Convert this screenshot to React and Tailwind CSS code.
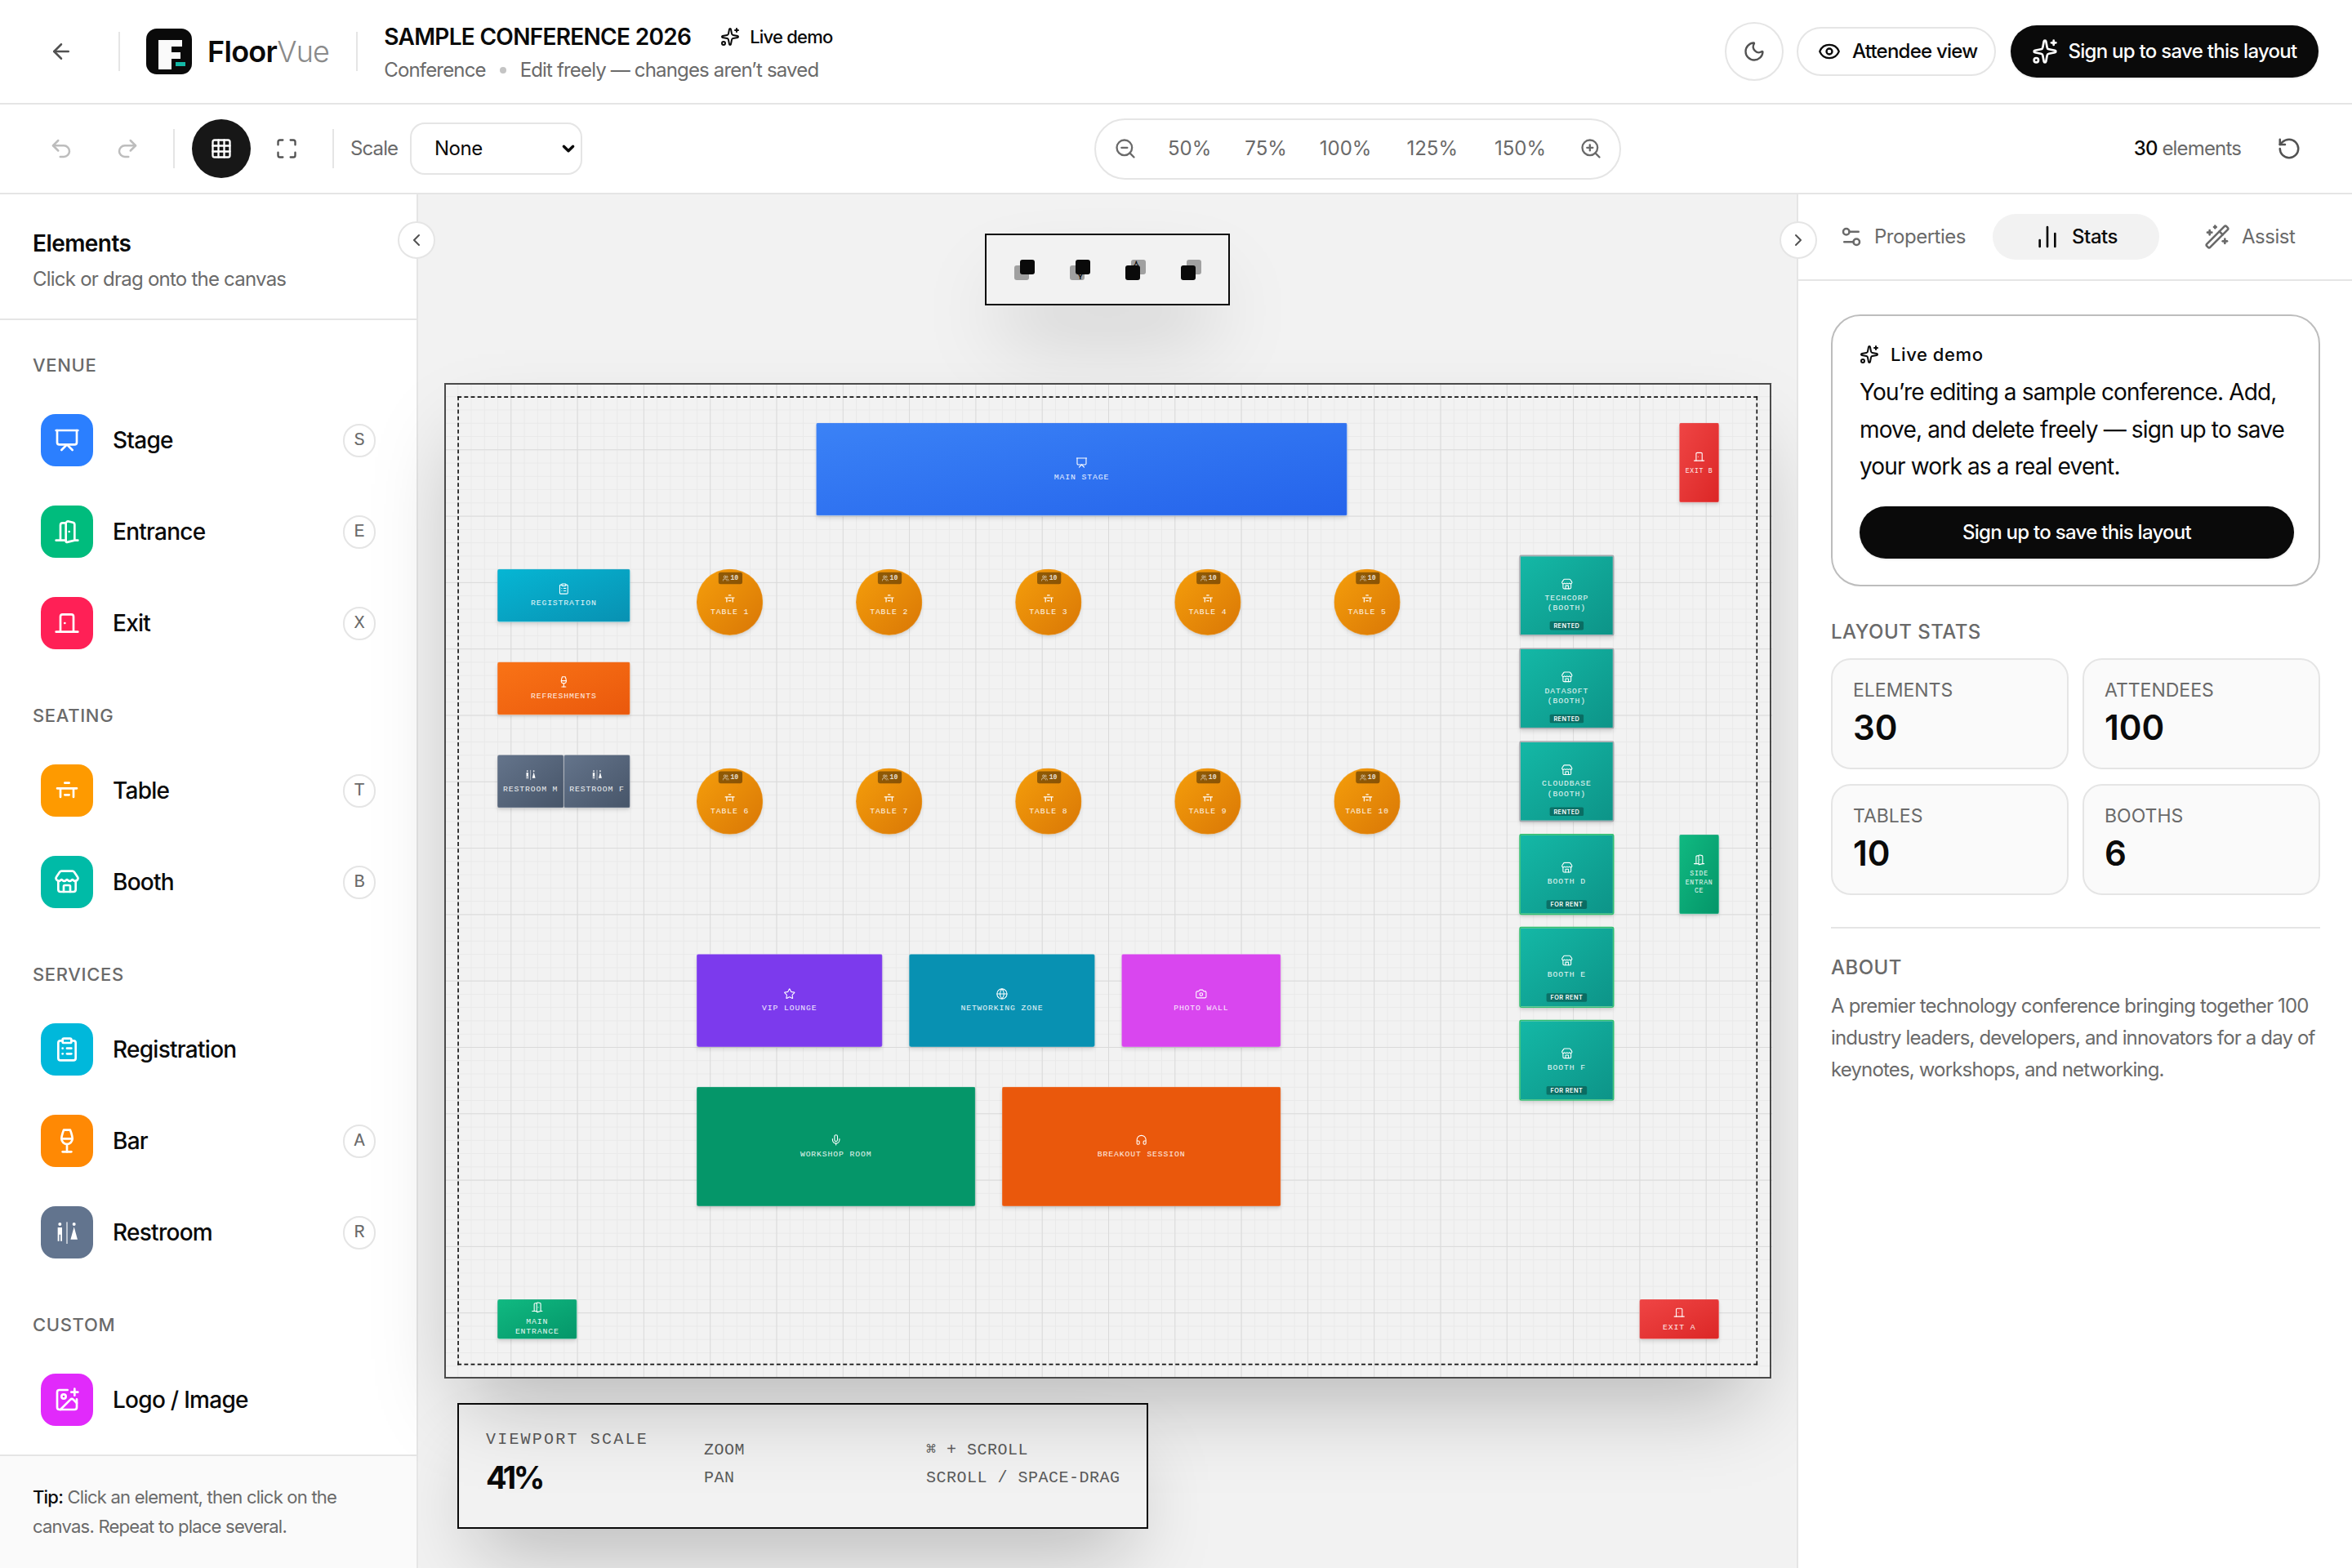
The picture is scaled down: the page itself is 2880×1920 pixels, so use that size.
import React from 'react';
import { ArrowLeft, Sparkles, Undo2, Redo2, Grid3x3, Maximize, Moon, Eye, ZoomIn, ZoomOut, RotateCcw, Settings2, ChartNoAxesColumn, WandSparkles, ChevronLeft, ChevronRight, Presentation, DoorOpen, DoorClosed, Store, ClipboardList, Wine, ImagePlus, Star, Globe, Camera, Mic, Headphones, Users } from 'lucide-react';

function TableIcon({ className }) {
  return (
    <svg viewBox="0 0 24 24" fill="none" stroke="currentColor" strokeWidth="2" strokeLinecap="round" className={className}>
      <path d="M10 5h4M3 10h18M6 10v8M18 10v8M10 16h4" />
    </svg>
  );
}
function RestroomIcon({ className }) {
  return (
    <svg viewBox="0 0 24 24" fill="currentColor" className={className}>
      <circle cx="5.5" cy="4.5" r="1.5" />
      <path d="M3.5 7.5h4V20h-1.4v-6H4.9v6H3.5z" />
      <rect x="11.4" y="2.5" width="1.2" height="20" opacity="0.7" />
      <circle cx="18.5" cy="4.5" r="1.5" />
      <path d="M18.5 7l3.2 11.5h-6.4z" />
    </svg>
  );
}
function LogoMark() {
  return (
    <svg viewBox="0 0 56 56" className="h-14 w-14 shrink-0">
      <rect width="56" height="56" rx="13" fill="#0a0a0a" />
      <path d="M15 14h29v8H31v7h11v8H31v13H15z" fill="#fafafa" />
      <rect x="36" y="41" width="12" height="5" fill="#14b8a6" />
    </svg>
  );
}
function LayerIcon({ front, arrow }) {
  return (
    <div className="relative h-[25px] w-[25px]">
      <div className={front === 'tr' ? 'absolute bottom-0 left-0 h-[18px] w-[18px] rounded-[3px] bg-[#0a0a0a] opacity-35' : 'absolute right-0 top-0 h-[18px] w-[18px] rounded-[3px] bg-[#0a0a0a] opacity-35'} />
      {arrow === 'down' && <div className="absolute left-[10px] top-[17px] text-[9px] font-bold leading-[8px] text-[#0a0a0a]">Y</div>}
      {arrow === 'up' && <div className="absolute right-[8px] top-0 text-[9px] font-bold leading-[8px] text-[#0a0a0a]">⋏</div>}
      <div className={front === 'tr' ? 'absolute right-0 top-0 h-[18px] w-[18px] rounded-[3px] bg-[#0a0a0a]' : 'absolute bottom-0 left-0 h-[18px] w-[18px] rounded-[3px] bg-[#0a0a0a]'} />
    </div>
  );
}

const groups = [
  { title: 'VENUE', items: [
    { n: 'Stage', k: 'S', I: Presentation, c: 'bg-[#2b7fff]' },
    { n: 'Entrance', k: 'E', I: DoorOpen, c: 'bg-[#00bc7d]' },
    { n: 'Exit', k: 'X', I: DoorClosed, c: 'bg-[#ff2056]' },
  ] },
  { title: 'SEATING', items: [
    { n: 'Table', k: 'T', I: TableIcon, c: 'bg-[#fe9a00]' },
    { n: 'Booth', k: 'B', I: Store, c: 'bg-[#00bba7]' },
  ] },
  { title: 'SERVICES', items: [
    { n: 'Registration', I: ClipboardList, c: 'bg-[#00b8db]' },
    { n: 'Bar', k: 'A', I: Wine, c: 'bg-[#ff8904]' },
    { n: 'Restroom', k: 'R', I: RestroomIcon, c: 'bg-[#62748e]' },
  ] },
  { title: 'CUSTOM', items: [
    { n: 'Logo / Image', I: ImagePlus, c: 'bg-[#e12afb]' },
  ] },
];

const G = {
  stage: 'bg-gradient-to-br from-[#3b82f6] to-[#2563eb]',
  cyan: 'bg-gradient-to-br from-[#06b6d4] to-[#0891b2]',
  orange: 'bg-gradient-to-br from-[#f97316] to-[#ea580c]',
  slate: 'bg-gradient-to-br from-[#64748b] to-[#475569]',
  green: 'bg-gradient-to-br from-[#10b981] to-[#059669]',
  red: 'bg-gradient-to-br from-[#ef4444] to-[#dc2626]',
};

const boxes = [
  { x: 560, y: 60, w: 800, h: 140, c: G.stage, I: Presentation, t: 'MAIN STAGE' },
  { x: 1860, y: 60, w: 60, h: 120, c: G.red, I: DoorClosed, t: 'EXIT B', s: true },
  { x: 80, y: 280, w: 200, h: 80, c: G.cyan, I: ClipboardList, t: 'REGISTRATION' },
  { x: 80, y: 420, w: 200, h: 80, c: G.orange, I: Wine, t: 'REFRESHMENTS' },
  { x: 80, y: 560, w: 100, h: 80, c: G.slate, I: RestroomIcon, t: 'RESTROOM M', xs: true },
  { x: 180, y: 560, w: 100, h: 80, c: G.slate, I: RestroomIcon, t: 'RESTROOM F', xs: true },
  { x: 1860, y: 680, w: 60, h: 120, c: G.green, I: DoorOpen, t: 'SIDE ENTRANCE', s: true },
  { x: 380, y: 860, w: 280, h: 140, c: 'bg-[#7c3aed]', I: Star, t: 'VIP LOUNGE' },
  { x: 700, y: 860, w: 280, h: 140, c: 'bg-[#0891b2]', I: Globe, t: 'NETWORKING ZONE' },
  { x: 1020, y: 860, w: 240, h: 140, c: 'bg-[#d946ef]', I: Camera, t: 'PHOTO WALL' },
  { x: 380, y: 1060, w: 420, h: 180, c: 'bg-[#059669]', I: Mic, t: 'WORKSHOP ROOM' },
  { x: 840, y: 1060, w: 420, h: 180, c: 'bg-[#ea580c]', I: Headphones, t: 'BREAKOUT SESSION' },
  { x: 80, y: 1380, w: 120, h: 60, c: G.green, I: DoorOpen, t: 'MAIN ENTRANCE' },
  { x: 1800, y: 1380, w: 120, h: 60, c: G.red, I: DoorClosed, t: 'EXIT A' },
];

const tables = [1, 2, 3, 4, 5, 6, 7, 8, 9, 10].map((n, i) => ({ n, x: 380 + (i % 5) * 240, y: i < 5 ? 280 : 580 }));

const booths = [
  { l: ['TECHCORP', '(BOOTH)'], chip: 'RENTED', y: 259 },
  { l: ['DATASOFT', '(BOOTH)'], chip: 'RENTED', y: 399 },
  { l: ['CLOUDBASE', '(BOOTH)'], chip: 'RENTED', y: 539 },
  { l: ['BOOTH D'], chip: 'FOR RENT', y: 679 },
  { l: ['BOOTH E'], chip: 'FOR RENT', y: 819 },
  { l: ['BOOTH F'], chip: 'FOR RENT', y: 959 },
];

function Canvas() {
  return (
    <div className="relative h-[1219px] w-[1625px] shrink-0 overflow-visible shadow-[0_50px_100px_-24px_rgba(0,0,0,0.25)]">
      <div className="absolute left-0 top-0 h-[1499px] w-[2000px] origin-top-left scale-[0.813] bg-[#f2f2f2] bg-[linear-gradient(to_right,#dadada_1.5px,transparent_1.5px),linear-gradient(to_bottom,#dadada_1.5px,transparent_1.5px),linear-gradient(to_right,#e9e9e9_1px,transparent_1px),linear-gradient(to_bottom,#e9e9e9_1px,transparent_1px)] bg-[size:100px_100px,100px_100px,20px_20px,20px_20px] font-['Liberation_Mono',monospace] text-white">
        <div className="absolute bottom-[20px] left-[20px] right-[22px] top-[20px] border-2 border-dashed border-[#111]" />
        {boxes.map((b) => (
          <div key={b.t} style={{ left: b.x, top: b.y, width: b.w, height: b.h }} className={`absolute flex flex-col items-center justify-center gap-[6px] rounded-[3px] border border-white/20 px-2 text-center shadow-md ${b.c}`}>
            <b.I className="h-[18px] w-[18px] shrink-0" strokeWidth={1.8} />
            <div className={b.s ? 'w-full text-[10px] leading-[13px] tracking-[0.09em] text-white/90 [overflow-wrap:anywhere]' : b.xs ? 'whitespace-nowrap text-[12px] leading-[15px] tracking-[0.09em] text-white/90' : 'text-[12px] leading-[15px] tracking-[0.09em] text-white/90'}>{b.t}</div>
          </div>
        ))}
        {tables.map((t) => (
          <div key={t.n} style={{ left: t.x, top: t.y }} className="absolute flex h-[100px] w-[100px] flex-col items-center justify-center gap-1 rounded-full border border-white/10 bg-gradient-to-br from-[#f59e0b] to-[#d97706] shadow-md">
            <div className="absolute left-[32px] top-[4px] flex h-[18px] w-[36px] items-center justify-center gap-[2px] rounded-[3px] bg-black/40 text-[10px] font-bold text-white/80">
              <Users className="h-[10px] w-[10px]" />10
            </div>
            <TableIcon className="mt-[8px] h-[18px] w-[18px] shrink-0" />
            <div className="whitespace-nowrap text-[12px] leading-[15px] tracking-[0.09em] text-white/90">TABLE {t.n}</div>
          </div>
        ))}
        {booths.map((b) => (
          <div key={b.l[0]} style={{ left: 1619, top: b.y }} className={b.chip === 'RENTED' ? 'absolute flex h-[122px] w-[143px] flex-col items-center justify-center rounded-[3px] border-[2.5px] border-[#a3a8ad] bg-gradient-to-br from-[#14b8a6] to-[#0d9488] text-center shadow-md' : 'absolute flex h-[122px] w-[143px] flex-col items-center justify-center rounded-[3px] border-[2.5px] border-[#2fbf71] bg-gradient-to-br from-[#14b8a6] to-[#0d9488] text-center shadow-md'}>
            <Store className="mb-[5px] h-[18px] w-[18px] shrink-0" strokeWidth={1.8} />
            {b.l.map((s) => <div key={s} className="text-[12px] leading-[15px] tracking-[0.09em] text-white/90">{s}</div>)}
            <div className="absolute bottom-[7px] rounded-[2px] bg-black/30 px-[6px] font-['Inter',sans-serif] text-[9px] font-semibold leading-[13px] tracking-[0.06em] text-white">{b.chip}</div>
          </div>
        ))}
      </div>
      <div className="pointer-events-none absolute inset-0 border-2 border-[#4a4a4a]" />
    </div>
  );
}

function Sidebar() {
  return (
    <aside className="relative flex w-[512px] shrink-0 flex-col border-r-2 border-[#e5e5e5] bg-white">
      <div className="flex h-[154px] shrink-0 flex-col border-b-2 border-[#e5e5e5] px-10 pt-[42px]">
        <div className="text-[28px] font-semibold leading-[36px] tracking-[-0.02em] text-[#0a0a0a]">Elements</div>
        <div className="mt-[8px] text-[24px] leading-[36px] tracking-[-0.032em] text-[#6a6a6a]">Click or drag onto the canvas</div>
      </div>
      <div className="flex min-h-0 flex-1 flex-col gap-[42px] overflow-hidden pt-[40px]">
        {groups.map((g) => (
          <div key={g.title}>
            <div className="mb-[21px] px-10 text-[22px] font-medium leading-[30px] tracking-[0.03em] text-[#6a6a6a]">{g.title}</div>
            {g.items.map((it) => (
              <div key={it.n} className="flex h-[112px] items-center pl-[50px] pr-[50px]">
                <div className={`flex h-16 w-16 shrink-0 items-center justify-center rounded-[18px] text-white ${it.c}`}>
                  <it.I className="h-8 w-8" strokeWidth={2} />
                </div>
                <div className="ml-[24px] flex-1 text-[28px] font-medium tracking-[-0.026em] text-[#0a0a0a]">{it.n}</div>
                {it.k && <div className="flex h-[41px] w-[40px] items-center justify-center rounded-full border-2 border-[#e5e5e5] font-['Liberation_Mono',monospace] text-[22px] text-[#6a6a6a]">{it.k}</div>}
              </div>
            ))}
          </div>
        ))}
      </div>
      <div className="h-[139px] shrink-0 border-t-2 border-[#e5e5e5] bg-[#fafafa] px-10 pt-[32px] text-[22px] leading-[36px] tracking-[-0.035em] text-[#6a6a6a]">
        <span className="font-medium text-[#0a0a0a]">Tip:</span> Click an element, then click on the canvas. Repeat to place several.
      </div>
      <div className="absolute left-[487px] top-[33px] flex h-[46px] w-[46px] items-center justify-center rounded-full border-2 border-[#e5e5e5] bg-white text-[#525252]">
        <ChevronLeft className="h-6 w-6" />
      </div>
    </aside>
  );
}

function RightPanel() {
  const stats = [['ELEMENTS', '30'], ['ATTENDEES', '100'], ['TABLES', '10'], ['BOOTHS', '6']];
  return (
    <aside className="relative flex w-[680px] shrink-0 flex-col border-l-2 border-[#e5e5e5] bg-white">
      <div className="flex h-[106px] shrink-0 items-center border-b-2 border-[#e5e5e5] text-[24px] tracking-[-0.02em] text-[#6a6a6a]">
        <div className="ml-[50px] flex w-[188px] items-center gap-[13px]"><Settings2 className="h-[30px] w-[30px]" />Properties</div>
        <div className="flex h-[56px] w-[204px] items-center justify-center gap-[14px] rounded-full bg-[#f2f2f2] font-medium text-[#0a0a0a]"><ChartNoAxesColumn className="h-8 w-8" />Stats</div>
        <div className="ml-[55px] flex items-center gap-[14px]"><WandSparkles className="h-8 w-8" />Assist</div>
      </div>
      <div className="flex flex-col pl-10 pr-[39px] pt-[41px]">
        <div className="h-[333px] rounded-[36px] border-2 border-[#bdbdbd] px-[33px] pt-[32px]">
          <div className="flex h-[30px] items-center gap-[14px] text-[22px] font-medium tracking-[0.026em] text-[#0a0a0a]"><Sparkles className="h-6 w-6" />Live demo</div>
          <p className="mt-[9px] text-[28px] leading-[45.5px] tracking-[-0.03em] text-[#0a0a0a]">You’re editing a sample conference. Add, move, and delete freely — sign up to save your work as a real event.</p>
          <div className="mt-[25px] flex h-[64px] w-[532px] items-center justify-center rounded-full bg-[#0a0a0a] text-[24px] font-medium tracking-[-0.03em] text-white shadow-sm">Sign up to save this layout</div>
        </div>
        <div className="mt-[40px] text-[24px] font-medium leading-[32px] tracking-[0.02em] text-[#6a6a6a]">LAYOUT STATS</div>
        <div className="mt-[16px] grid grid-cols-2 gap-x-[17px] gap-y-[18px]">
          {stats.map(([a, b]) => (
            <div key={a} className="h-[136px] rounded-[24px] border-2 border-[#e5e5e5] bg-[#fafafa] px-[25px] pt-[21px]">
              <div className="text-[23px] leading-[32px] text-[#6a6a6a]">{a}</div>
              <div className="mt-[2px] text-[42px] font-semibold leading-[56px] text-[#0a0a0a]">{b}</div>
            </div>
          ))}
        </div>
        <div className="mt-[39px] h-[2px] bg-[#e5e5e5]" />
        <div className="mt-[32px] text-[24px] font-medium leading-[32px] tracking-[0.02em] text-[#6a6a6a]">ABOUT</div>
        <p className="mt-[11px] text-[24px] leading-[39px] tracking-[-0.035em] text-[#6a6a6a]">A premier technology conference bringing together 100 industry leaders, developers, and innovators for a day of keynotes, workshops, and networking.</p>
      </div>
      <div className="absolute -left-[23px] top-[33px] flex h-[46px] w-[46px] items-center justify-center rounded-full border-2 border-[#e5e5e5] bg-white text-[#525252]">
        <ChevronRight className="h-6 w-6" />
      </div>
    </aside>
  );
}

export default function App() {
  return (
    <div className="flex h-screen w-screen flex-col overflow-hidden bg-white font-['Inter',sans-serif]">
      <header className="flex h-[128px] shrink-0 items-center border-b-2 border-[#e5e5e5] pl-[60px] pr-[41px]">
        <ArrowLeft className="h-[30px] w-[30px] text-[#525252]" strokeWidth={2} />
        <div className="ml-[55px] h-[48px] w-[2px] bg-[#e5e5e5]" />
        <div className="ml-8"><LogoMark /></div>
        <div className="ml-[19px] text-[36px] font-semibold tracking-[-0.02em] text-[#0a0a0a]">Floor<span className="font-light text-[#8a8a8a]">Vue</span></div>
        <div className="ml-[33px] h-[48px] w-[2px] bg-[#e5e5e5]" />
        <div className="ml-[32px] pt-[4px]">
          <div className="flex items-center">
            <div className="text-[28px] font-semibold leading-[38px] tracking-[-0.025em] text-[#0a0a0a]">SAMPLE CONFERENCE 2026</div>
            <div className="ml-[36px] flex items-center gap-[12px] text-[22px] font-medium tracking-[-0.035em] text-[#0a0a0a]"><Sparkles className="h-6 w-6" />Live demo</div>
          </div>
          <div className="mt-[4px] flex items-center text-[24px] leading-[36px] tracking-[-0.035em] text-[#6a6a6a]">
            Conference<span className="mx-[17px] h-2 w-2 rounded-full bg-[#c4c4c4]" />Edit freely — changes aren’t saved
          </div>
        </div>
        <div className="flex-1" />
        <div className="flex h-[72px] w-[72px] items-center justify-center rounded-full border-2 border-[#e5e5e5] text-[#525252]"><Moon className="h-7 w-7" /></div>
        <div className="ml-[16px] flex h-[60px] w-[244px] items-center gap-[14px] rounded-full border-2 border-[#e5e5e5] pl-[24px] text-[24px] font-medium tracking-[-0.032em] text-[#0a0a0a]"><Eye className="h-7 w-7" />Attendee view</div>
        <div className="ml-[18px] flex h-[64px] w-[377px] items-center justify-center gap-[12px] rounded-full bg-[#0a0a0a] text-[24px] font-medium tracking-[-0.03em] text-white shadow-sm"><Sparkles className="h-8 w-8" />Sign up to save this layout</div>
      </header>
      <div className="flex h-[110px] shrink-0 items-center border-b-2 border-[#e5e5e5] pl-[60px] pr-[62px]">
        <Undo2 className="h-[30px] w-[30px] text-[#bdbdbd]" />
        <Redo2 className="ml-[51px] h-[30px] w-[30px] text-[#bdbdbd]" />
        <div className="ml-[41px] h-[48px] w-[2px] bg-[#e5e5e5]" />
        <div className="ml-[21px] flex h-[72px] w-[72px] items-center justify-center rounded-full bg-[#171717] text-white"><Grid3x3 className="h-7 w-7" /></div>
        <Maximize className="ml-[30px] h-7 w-7 text-[#525252]" />
        <div className="ml-[42px] h-[48px] w-[2px] bg-[#e5e5e5]" />
        <div className="ml-[20px] w-[57px] text-[24px] tracking-[-0.037em] text-[#6a6a6a]">Scale</div>
        <div className="relative ml-[16px] h-[64px] w-[211px]">
          <select className="h-full w-full appearance-none rounded-[18px] border-2 border-[#e5e5e5] bg-white pl-[28px] text-[24px] tracking-[-0.02em] text-[#0a0a0a]"><option>None</option></select>
          <svg viewBox="0 0 16 16" fill="none" stroke="#0a0a0a" strokeWidth="3" strokeLinecap="round" strokeLinejoin="round" className="pointer-events-none absolute right-[8px] top-[23px] h-[18px] w-[18px]"><path d="M3 5.5l5 5 5-5" /></svg>
        </div>
        <div className="ml-[627px] flex h-[75px] w-[645px] items-center rounded-full border-2 border-[#e5e5e5] pl-[22px] text-[24px] text-[#6a6a6a]">
          <ZoomOut className="h-7 w-7 shrink-0" />
          <span className="ml-[38px]">50%</span>
          <span className="ml-[41px]">75%</span>
          <span className="ml-[40px]">100%</span>
          <span className="ml-[43px]">125%</span>
          <span className="ml-[45px]">150%</span>
          <ZoomIn className="ml-[41px] h-7 w-7 shrink-0" />
        </div>
        <div className="flex-1" />
        <div className="text-[24px] tracking-[-0.035em] text-[#6a6a6a]"><span className="font-medium text-[#0a0a0a]">30</span> elements</div>
        <RotateCcw className="ml-[44px] h-[30px] w-[30px] text-[#525252]" />
      </div>
      <div className="flex min-h-0 flex-1">
        <Sidebar />
        <main className="flex min-w-0 flex-1 flex-col items-center bg-[#f2f2f2]">
          <div className="mt-[48px] flex h-[88px] w-[300px] shrink-0 items-center justify-center gap-[43px] border-2 border-[#0a0a0a] bg-[#f2f2f2] shadow-[0_50px_100px_-24px_rgba(0,0,0,0.25)]">
            <LayerIcon front="tr" />
            <LayerIcon front="tr" arrow="down" />
            <LayerIcon front="bl" arrow="up" />
            <LayerIcon front="bl" />
          </div>
          <div className="mt-[95px]"><Canvas /></div>
          <div className="ml-[48px] mt-[30px] flex h-[154px] w-[846px] shrink-0 items-start self-start border-2 border-[#0a0a0a] bg-[#f2f2f2] pl-[33px] pt-[27px] font-['Liberation_Mono',monospace] text-[20px] text-[#5a5a5a] shadow-[0_50px_100px_-24px_rgba(0,0,0,0.25)]">
            <div className="w-[267px]">
              <div className="leading-[32px] tracking-[2.2px]">VIEWPORT SCALE</div>
              <div className="mt-[6px] font-['Inter',sans-serif] text-[38px] font-bold leading-[48px] tracking-[-0.09em] text-[#0a0a0a]">41%</div>
            </div>
            <div className="mt-[15px] grid grid-cols-[272px_auto] gap-y-[6px] leading-[28px] tracking-[0.5px]">
              <div>ZOOM</div><div>⌘ + SCROLL</div>
              <div>PAN</div><div>SCROLL / SPACE-DRAG</div>
            </div>
          </div>
        </main>
        <RightPanel />
      </div>
    </div>
  );
}
